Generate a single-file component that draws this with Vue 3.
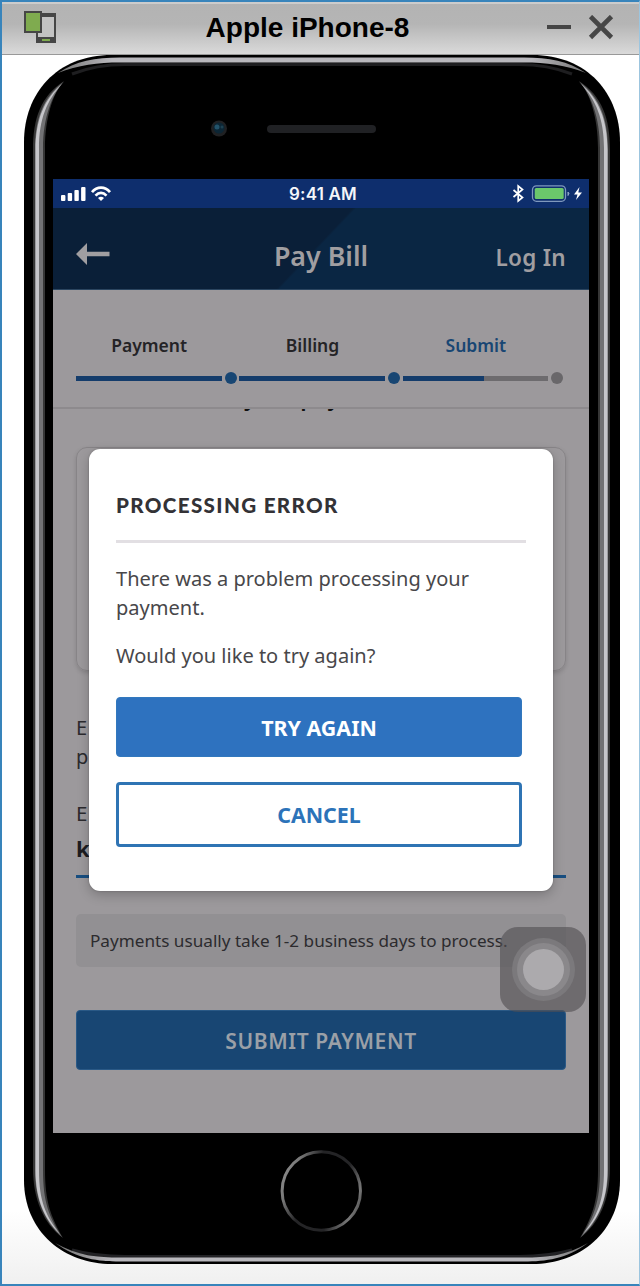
<script setup>
const steps = [
  { label: 'Payment', fill: 100, done: true },
  { label: 'Billing', fill: 100, done: true },
  { label: 'Submit', fill: 56, done: false, current: true }
]
const bars = [6, 8, 11, 14]
</script>

<template>
  <div class="window">
    <header class="titlebar">
      <svg class="devices" width="34" height="34" viewBox="0 0 34 34">
        <path d="M12 2h20v30H12z" fill="#464646" />
        <path d="M14 6h16v20H14z" fill="#c3c3c3" />
        <path d="M18 28h8v2h-8z" fill="#7fab4f" />
        <path d="M0 0h18v22H0z" fill="#464646" />
        <path d="M2 2h14v18H2z" fill="#7fab4f" />
      </svg>
      <h1 class="title">Apple iPhone-8</h1>
      <svg class="controls" width="68" height="26" viewBox="0 0 68 26">
        <path d="M0 12h24" stroke="#464646" stroke-width="4" />
        <path d="M43.500 1.500l21 21M64.500 1.500l-21 21" stroke="#464646" stroke-width="4.600" />
      </svg>
    </header>

    <main class="stage">
      <div class="phone">
        <svg class="shell" width="596" height="1209" viewBox="24 55 596 1209">
          <defs>
            <linearGradient id="home" x1="0" y1="0.3" x2="1" y2="0.7">
              <stop offset="0" stop-color="#8a8a8a" />
              <stop offset=".12" stop-color="#777" />
              <stop offset=".35" stop-color="#242426" />
              <stop offset=".7" stop-color="#242426" />
              <stop offset=".92" stop-color="#777" />
              <stop offset="1" stop-color="#555" />
            </linearGradient>
            <linearGradient id="rim" x1="60" y1="0" x2="584" y2="0" gradientUnits="userSpaceOnUse">
              <stop offset="0" stop-color="#777" />
              <stop offset=".1" stop-color="#b9b8bd" />
              <stop offset=".9" stop-color="#b9b8bd" />
              <stop offset="1" stop-color="#777" />
            </linearGradient>
            <g id="edge">
              <path d="M64 81C41 96 33 118 33 150V1168C33 1200 44 1224 63 1238C51 1217 45 1202 45 1170V148C45 118 53 93 64 81Z" fill="#363636" />
              <path d="M64 81.500C43 97 35 119 35 150V1170C35 1200 45 1222 62 1237C49 1217 43 1202 43 1170V148C43 118 52 94 64 81.500Z" fill="#727274" />
              <path d="M62 84C44 99 35.500 120 35.500 150V1170C35.500 1200 45 1220 60 1234C46 1216 39 1202 39 1170V148C39 119 47 100 62 84Z" fill="#c6c6ca" />
            </g>
          </defs>
          <path d="M24 142C24 94 56 55 112 55H532C588 55 620 94 620 142V1180C620 1232 580 1264 532 1264H112C64 1264 24 1232 24 1180Z" fill="#000" />
          <path d="M72 74C90 67 105 64.500 125 64.500H519C539 64.500 554 67 572 74" fill="none" stroke="#1e1e20" stroke-width="3" />
          <path d="M58 73C76 61 95 57.500 120 57.500H524C549 57.500 568 61 586 73C566 65 546 62.500 524 62.500H120C98 62.500 78 65 58 73Z" fill="url(#rim)" />
          <path d="M72 1250C90 1255 105 1256.500 125 1256.500H519C539 1256.500 554 1255 572 1250" fill="none" stroke="#222225" stroke-width="3" />
          <path d="M55 1243C78 1256 98 1257.500 120 1257.500H524C546 1257.500 566 1256 588 1243C566 1259 546 1261.500 524 1261.500H120C98 1261.500 78 1259 55 1243Z" fill="url(#rim)" />
          <use href="#edge" />
          <use href="#edge" transform="translate(643 0) scale(-1 1)" />
          <circle cx="219" cy="128.500" r="8" fill="#202123" />
          <circle cx="219" cy="128" r="5.500" fill="#0c2635" />
          <circle cx="217" cy="127" r="2.500" fill="#23536a" />
          <circle cx="222" cy="127" r="1.500" fill="#1d4151" />
          <rect x="267" y="125" width="109" height="8" rx="4" fill="#202124" />
          <circle cx="321.300" cy="1191" r="39.200" fill="none" stroke="url(#home)" stroke-width="3" />
        </svg>

        <section class="screen">
          <div class="status">
            <svg class="signal" width="52" height="16" viewBox="0 0 52 16">
              <rect v-for="(h, i) in bars" :key="h" :x="i * 6.700" :y="15 - h" width="4.400" :height="h" rx="1" fill="#fff" />
              <g fill="none" stroke="#fff" stroke-width="2.700">
                <path d="M31 6.200C36 .200 44 .200 49 6.200" />
                <path d="M34.500 9.600C38 6 42 6 45.500 9.600" />
              </g>
              <path d="M37 12.100Q40 9.500 43 12.100L40 15Z" fill="#fff" />
            </svg>
            <span class="clock">9:41 AM</span>
            <svg class="power" width="72" height="20" viewBox="0 0 72 20">
              <path d="M2.500 6L11.500 13.500L7.200 17V2L11.500 5.500L2.500 13" fill="none" stroke="#fff" stroke-width="1.700" />
              <rect x="21.500" y="1.800" width="33" height="15.500" rx="4" fill="none" stroke="#7f98bd" stroke-width="1.300" />
              <rect x="23.700" y="4" width="29" height="11" rx="1.500" fill="#6bc86b" />
              <path d="M57 8Q59 9.500 57 11.500Z" fill="#8fa5c6" stroke="#8fa5c6" />
              <path d="M68.500 3L63 10.500H66.500L65 16L71 8.500H67.300Z" fill="#fff" />
            </svg>
          </div>

          <nav class="nav">
            <svg class="back" width="34" height="22" viewBox="0 0 34 22">
              <path d="M0 11L11 0V8.800H33.500V13.200H11V22Z" fill="#a09ea1" />
            </svg>
            <span class="nav-title">Pay Bill</span>
            <span class="login">Log In</span>
          </nav>

          <div class="steps">
            <div v-for="s in steps" :key="s.label" class="step">
              <span class="step-label" :class="{ current: s.current }">{{ s.label }}</span>
              <div class="track">
                <div class="line"><div class="line-fill" :style="{ width: s.fill + '%' }"></div></div>
                <div class="dot" :class="{ done: s.done }"></div>
              </div>
            </div>
          </div>

          <div class="content">
            <div class="peek"><span>your payment</span></div>
            <div class="card"></div>
            <p class="copy">E<br />p</p>
            <div class="field">
              <label class="field-label">E</label>
              <div class="field-value">k</div>
            </div>
            <div class="note">Payments usually take 1-2 business days to process.</div>
            <button class="submit">SUBMIT PAYMENT</button>
          </div>

          <div class="modal">
            <h2 class="modal-title">PROCESSING ERROR</h2>
            <p class="modal-text">There was a problem processing your<br />payment.</p>
            <p class="modal-text ask">Would you like to try again?</p>
            <button class="primary">TRY AGAIN</button>
            <button class="secondary">CANCEL</button>
          </div>

          <div class="assist"><div class="ring"><div class="ring-in"><div class="knob"></div></div></div></div>
        </section>
      </div>
    </main>
  </div>
</template>

<style>
body { margin: 0; overflow: hidden; }
</style>

<style scoped>
* { box-sizing: border-box; }
.window {
  width: 640px;
  height: 1286px;
  border: 2px solid #3884bb;
  border-right: 1px solid #9cc5df;
  display: flex;
  flex-direction: column;
  font-family: "Noto Sans", sans-serif;
}
.titlebar {
  height: 53px;
  flex: none;
  display: flex;
  align-items: center;
  justify-content: space-between;
  padding: 0 24px 3px 22px;
  border-top: 2px solid #cccccc;
  border-bottom: 1px solid #999;
  background: linear-gradient(#b3b3b3 0, #b5b5b5 40%, #dadada 100%);
}
.title {
  margin: 0;
  font: bold 28px/50px "Liberation Sans", Arial, sans-serif;
  color: #000;
  padding-left: 10px;
}
.stage {
  flex: 1;
  padding-left: 22px;
  background: linear-gradient(#fff 94%, #f0f0f0);
}
.phone {
  position: relative;
  width: 596px;
  height: 1209px;
  padding: 124px 31px 0 29px;
}
.shell { position: absolute; left: 0; top: 0; }
.screen {
  position: relative;
  width: 536px;
  height: 954px;
  overflow: hidden;
  background: #9c999c;
  display: flex;
  flex-direction: column;
}
.status {
  height: 29px;
  flex: none;
  display: grid;
  grid-template-columns: 1fr auto 1fr;
  align-items: center;
  padding: 0 6px 0 8px;
  background: #0e2e6d;
}
.signal { margin-top: -1px; }
.clock {
  font: 600 17px/30px Inter, sans-serif;
  letter-spacing: .2px;
  padding-left: 2px;
  color: #f4f6fa;
}
.power { justify-self: end; }
.nav {
  height: 82px;
  flex: none;
  display: grid;
  grid-template-columns: 1fr auto 1fr;
  align-items: center;
  padding: 14px 23px 0;
  border-bottom: 1px solid #2b4560;
  color: #a09ea1;
  background: linear-gradient(133.500deg, #0a1f38 49%, #0a2643 49.500%, #0a2643 100%);
}
.back { margin-top: -3px; }
.nav-title { font: 600 26.800px/36px "Noto Sans", sans-serif; padding-top: 1px; }
.login { justify-self: end; font-size: 22.500px; font-weight: 600; line-height: 36px; letter-spacing: .3px; padding-top: 4px; }
.steps {
  height: 119px;
  flex: none;
  display: flex;
  padding: 41px 23px 0 23px;
  border-bottom: 2px solid #8d8a8d;
}
.step { flex: 1; }
.step-label {
  display: block;
  margin-right: 17px;
  text-align: center;
  font-size: 17.500px;
  font-weight: 600;
  line-height: 28px;
  color: #242326;
}
.step-label.current { color: #184673; }
.track { display: flex; align-items: center; height: 12px; margin-top: 13px; }
.line { flex: 1; height: 5px; background: #6d6b6e; }
.line-fill { height: 5px; background: #143c6b; }
.dot { width: 12px; height: 12px; margin: 0 2.500px 0 3px; border-radius: 50%; background: #69676a; }
.dot.done { background: #184673; }
.content {
  flex: 1;
  padding: 0 23px;
  color: #2c2b2e;
}
.peek {
  height: 4px;
  overflow: hidden;
  display: flex;
  justify-content: center;
  align-items: flex-end;
  font-size: 22.500px;
  font-weight: 600;
  color: #111;
}
.peek span { line-height: 33px; }
.card {
  height: 224px;
  margin-top: 34px;
  border: 1.500px solid #878487;
  border-radius: 11px;
  box-shadow: 0 2px 4px rgba(0, 0, 0, .14);
}
.copy { margin: 42px 0 0; font-size: 20px; line-height: 29px; }
.field { margin-top: 28px; border-bottom: 3px solid #184e80; height: 79px; }
.field-label { display: block; font-size: 20.500px; line-height: 29px; }
.field-value { font-size: 22px; font-weight: 700; line-height: 40px; color: #1d1c1f; }
.note {
  margin-top: 36px;
  height: 53px;
  padding-left: 14px;
  border-radius: 5px;
  background: #929093;
  font-size: 17.150px;
  line-height: 53px;
}
button { display: block; font-family: inherit; padding: 0; }
.submit {
  width: 490px;
  height: 60px;
  margin-top: 43px;
  padding-top: 2px;
  border: 1px solid #2a5986;
  border-radius: 4px;
  background: #184673;
  color: #9ba0a7;
  font-size: 21px;
  font-weight: 600;
  letter-spacing: .6px;
}
.modal {
  position: absolute;
  left: 36px;
  top: 270px;
  width: 464px;
  height: 442px;
  padding: 40px 27px 0;
  border-radius: 11px;
  background: #fff;
  box-shadow: 0 4px 12px rgba(0, 0, 0, .22), 0 0 2px rgba(0, 0, 0, .25);
}
.modal-title {
  margin: 0;
  padding-bottom: 19px;
  border-bottom: 3px solid #e2dfe3;
  font: 900 20.600px/32px Lato, sans-serif;
  letter-spacing: 1.350px;
  color: #333236;
}
.modal-text { margin: 21px 0 0; font-size: 20.050px; line-height: 29px; color: #48474a; }
.ask { margin-top: 19px; }
.primary, .secondary { width: 406px; border-radius: 4px; font-size: 21.400px; font-weight: 700; }
.primary {
  margin-top: 27px;
  height: 60px;
  border: 1px solid #3278bd;
  background: #2e72bf;
  color: #fff;
}
.secondary {
  margin-top: 25px;
  height: 65px;
  border: 3px solid #2f74b4;
  background: #fff;
  color: #2c73b9;
}
.assist {
  position: absolute;
  left: 447px;
  top: 748px;
  width: 86px;
  height: 85px;
  border-radius: 18px;
  display: grid;
  place-items: center;
  background: rgba(82, 79, 82, .62);
}
.ring, .ring-in, .knob { border-radius: 50%; display: grid; place-items: center; }
.ring { width: 63px; height: 63px; background: #7b797c; }
.ring-in { width: 53px; height: 53px; background: #8a888b; }
.knob { width: 41px; height: 41px; background: #acaaad; }
</style>
